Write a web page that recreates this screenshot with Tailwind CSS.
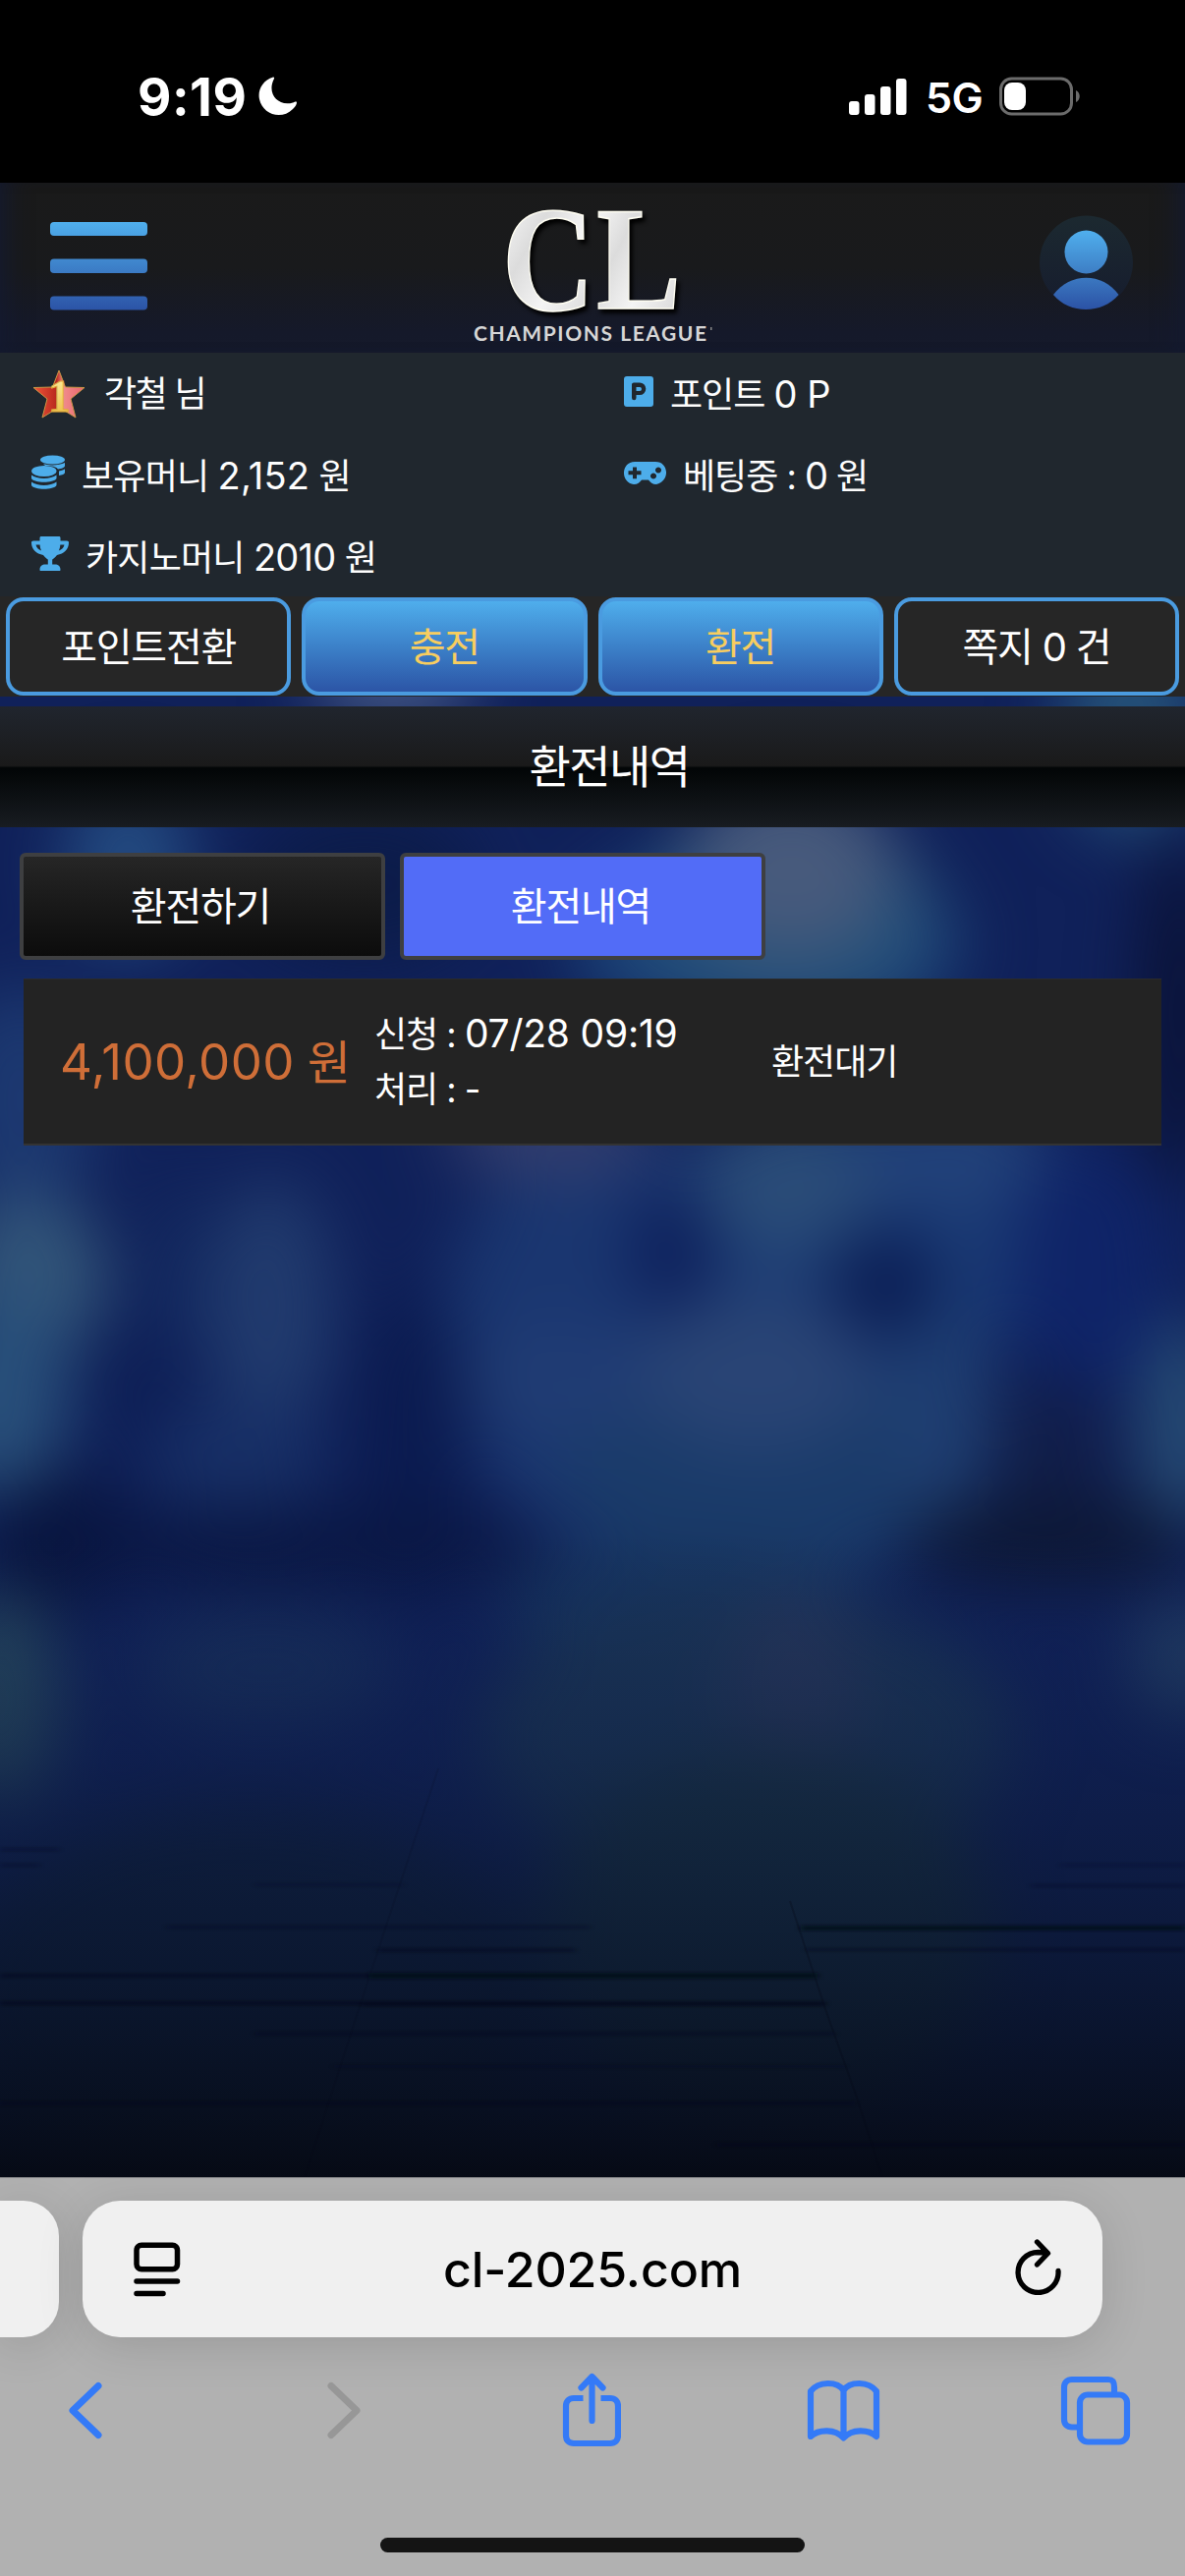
<!DOCTYPE html>
<html lang="ko">
<head>
    <meta charset="UTF-8">
    <meta name="viewport" content="width=device-width, initial-scale=1.0">
    <title>환전내역</title>
    <script src="https://cdn.jsdelivr.net/npm/@tailwindcss/browser@4"></script>
</head>
<body class="w-[1206px] h-[2622px] overflow-hidden bg-black text-white font-['Inter','Noto_Sans_CJK_KR',sans-serif] flex flex-col">

    <!-- status bar -->
    <div class="h-[186px] shrink-0 bg-black flex justify-between pt-[67px] pl-[140px] pr-[106px] font-semibold">
        <div class="flex items-center h-[62px]">
            <span class="text-[53px] leading-none font-bold tracking-[0.5px] w-[123px] whitespace-nowrap pt-[2px]">9:19</span>
            <svg class="w-[40px] h-[40px]" viewBox="0 0 40 40" fill="#fff"><path d="M15 0.6C4 4 -1 14 1 23c3 15 22 22 34 10 3-3 4-5 4-7-1-1-2 0-4 .5C20 31 8 17 16 2c.4-1-.2-1.600-1-1.400z"/></svg>
        </div>
        <div class="flex items-center h-[62px]">
            <svg class="w-[59px] h-[38px] mr-[19px]" viewBox="0 0 59 38" fill="#fff">
                <rect x="0" y="24" width="10.500" height="14" rx="3"/>
                <rect x="16" y="17" width="10.500" height="21" rx="3"/>
                <rect x="32" y="9" width="10.500" height="29" rx="3"/>
                <rect x="48" y="1" width="10.500" height="37" rx="3"/>
            </svg>
            <span class="text-[43px] leading-none tracking-[-0.5px] w-[57px] pt-[2px]">5G</span>
            <svg class="w-[84px] h-[40px] ml-[17px]" viewBox="0 0 84 40">
                <rect x="2.500" y="2" width="72" height="36" rx="11" fill="none" stroke="#6b6b6b" stroke-width="3"/>
                <rect x="6" y="6" width="22" height="28" rx="8" fill="#fff"/>
                <path d="M79 14c5 2 5 10 0 12z" fill="#6b6b6b"/>
            </svg>
        </div>
    </div>

    <!-- site header -->
    <header class="h-[173px] shrink-0 bg-[linear-gradient(to_bottom,#1a1a1a_0%,#191a1c_50%,#15192a_88%,#151a2b_100%)] shadow-[inset_26px_0_26px_-20px_#141a30,inset_-26px_0_26px_-20px_#141a30] flex justify-between items-start pl-[51px] pr-[52px]">
        <svg class="w-[99px] h-[92px] mt-[39px]" viewBox="0 0 99 92">
            <defs>
                <linearGradient id="blueFade" gradientUnits="userSpaceOnUse" x1="0" y1="0" x2="0" y2="92">
                    <stop offset="0" stop-color="#50b0ee"/><stop offset="1" stop-color="#2b52a5"/>
                </linearGradient>
            </defs>
            <g fill="url(#blueFade)">
                <rect x="0" y="1" width="99" height="14" rx="4"/>
                <rect x="0" y="38.500" width="99" height="14.500" rx="4"/>
                <rect x="0" y="76.500" width="99" height="14" rx="4"/>
            </g>
        </svg>
        <svg class="w-[250px] h-[173px] overflow-visible" viewBox="478 186 250 173">
            <defs>
                <linearGradient id="silver" x1="0" y1="0" x2="1" y2="1">
                    <stop offset="0" stop-color="#ffffff"/><stop offset=".35" stop-color="#dcdcdc"/><stop offset=".6" stop-color="#f4f4f4"/><stop offset="1" stop-color="#cfcfcf"/>
                </linearGradient>
            </defs>
            <g class="drop-shadow-[3px_4px_2px_#000]" font-family="Liberation Serif, serif" font-weight="700" stroke-width="1.500" stroke="#fffef2" fill="url(#silver)">
                <text x="511" y="315.500" font-size="152" textLength="94" lengthAdjust="spacingAndGlyphs">C</text>
                <text x="607" y="314" font-size="150" textLength="86" lengthAdjust="spacingAndGlyphs">L</text>
            </g>
            <text x="482" y="347" font-family="Lato, sans-serif" font-weight="700" font-size="21" fill="#d6d6d6" textLength="237">CHAMPIONS LEAGUE</text>
            <rect x="723" y="333" width="1.500" height="3" fill="#888"/>
        </svg>
        <svg class="w-[98px] h-[102px] mt-[33px]" viewBox="1056 219 98 102">
            <defs>
                <linearGradient id="userFade" gradientUnits="userSpaceOnUse" x1="0" y1="234" x2="0" y2="315">
                    <stop offset="0" stop-color="#50b0ee"/><stop offset=".5" stop-color="#3f82c8"/><stop offset="1" stop-color="#2b52a5"/>
                </linearGradient>
                <linearGradient id="userBg" x1="0" y1="0" x2="0" y2="1">
                    <stop offset="0" stop-color="#1c2930"/><stop offset="1" stop-color="#161c2e"/>
                </linearGradient>
            </defs>
            <circle cx="1105.500" cy="267" r="47.500" fill="url(#userBg)"/>
            <circle cx="1105.500" cy="256.500" r="22" fill="url(#userFade)"/>
            <path d="M1072 300c17-23 50-23 66.500 0-17 20-50 20-66.500 0z" fill="url(#userFade)"/>
        </svg>
    </header>

    <!-- account info -->
    <section class="h-[248px] shrink-0 bg-[#20272e] grid grid-cols-2 auto-rows-[83px] text-[36px] leading-none text-[#fdfdfd]">
        <div class="flex items-center pl-[33px]">
            <svg class="w-[54px] h-[52px] mr-[19px] mt-[3px]" viewBox="0 0 54 52">
                <defs>
                    <linearGradient id="starRed" x1="0" y1="0" x2="1" y2="0">
                        <stop offset="0" stop-color="#f0553a"/><stop offset=".45" stop-color="#b9291e"/><stop offset=".6" stop-color="#f08a8a"/><stop offset="1" stop-color="#e8646c"/>
                    </linearGradient>
                    <linearGradient id="oneGold" x1="0" y1="0" x2="0" y2="1">
                        <stop offset="0" stop-color="#fff3a8"/><stop offset="1" stop-color="#e9b93a"/>
                    </linearGradient>
                </defs>
                <path d="M27 1l6.500 17L53 18.500 39 30l5 19-17-10.500L10 49l5-19L1 18.500l19.500-.5z" fill="url(#starRed)" stroke="#c99545" stroke-width="1"/>
                <text x="16" y="43" font-family="Liberation Serif, serif" font-weight="700" font-size="46" fill="url(#oneGold)" stroke="#e0a83a" stroke-width="1">1</text>
            </svg>
            <span class="tracking-[-1.6px]">각철 님</span>
        </div>
        <div class="flex items-center pl-[32px]">
            <svg class="w-[30px] h-[31px] mr-[17px] -mt-[4px]" viewBox="0 0 30 31">
                <path fill="#4dadea" fill-rule="evenodd" d="M3 0h24a3 3 0 0 1 3 3v25a3 3 0 0 1-3 3H3a3 3 0 0 1-3-3V3a3 3 0 0 1 3-3zM8 8v14a2 2 0 0 0 4.500 0v-3H16a6.300 6.300 0 0 0 0-12.600H10A2 2 0 0 0 8 8zM12.500 11H16a2 2 0 0 1 0 4h-3.500z"/>
            </svg>
            <span class="tracking-[-1px]">포인트 <span class="text-[38px] tracking-[-0.5px]">0 P</span></span>
        </div>
        <div class="flex items-center pl-[32px]">
            <svg class="w-[34px] h-[35px] mr-[17px] -mt-[6px]" viewBox="0 0 34 35" fill="#4dadea">
                <ellipse cx="21.500" cy="5" rx="12.500" ry="4.500"/>
                <path d="M12 9c5 2 16 2 22-1v3c0 2-3 3-7 3.500C24 11 17 11 14 11z"/>
                <path d="M28 16.500c3-.5 5-1.300 6-2.300V18c0 1.500-3 2.600-6 3z"/>
                <ellipse cx="12.800" cy="16.500" rx="12.700" ry="5.600"/>
                <path d="M0 20.500c6 4.500 19.500 4.500 25.500 0V24c-3 5-22.500 5-25.500 0z"/>
                <path d="M0 27.500c6 4.500 19.500 4.500 25.500 0V31c-3 5-22.500 5-25.500 0z"/>
            </svg>
            <span class="tracking-[-0.8px]">보유머니 <span class="text-[38px] tracking-[0.2px]">2,152</span> 원</span>
        </div>
        <div class="flex items-center pl-[32px]">
            <svg class="w-[43px] h-[23px] mr-[17px] -mt-[4px]" viewBox="0 0 43 23">
                <path fill="#4dadea" fill-rule="evenodd" d="M11 0h21c14 0 15 20 1 23-4 0-6-2-8-4.500h-7C16 21 14 23 10 23-4 21-3 0 11 0zM9 5.500v3.800H4.500v4H9v4h4v-4h4.500v-4H13V5.500zM30 11.500a3 3 0 1 0 .01 0zM35 5.500a3 3 0 1 0 .01 0z"/>
            </svg>
            <span class="tracking-[-1px]">베팅중 : <span class="text-[38px]">0</span> 원</span>
        </div>
        <div class="flex items-center pl-[32px]">
            <svg class="w-[38px] h-[35px] mr-[17px] -mt-[6px]" viewBox="0 0 38 35">
                <path fill="#4dadea" fill-rule="evenodd" d="M10 0h18c1 0 1.500.6 1.500 1.500V4.500H36c1.300 0 2 .7 2 1.800 0 7-5 11.500-12 12.700-2 2.500-4 4-4.800 4.500v5H24c3 0 5.500 1.500 5.500 5.500 0 .6-.4 1-1 1h-19c-.6 0-1-.4-1-1 0-4 2.500-5.500 5.500-5.500h2.800v-5C16 23 14 21.500 12 19 5 17.800 0 13.300 0 6.300 0 5.200.7 4.500 2 4.500h6.500V1.500C8.500.6 9 0 10 0zM4.500 8.500c.6 3 2.600 5 5.600 6-1-2-1.400-4-1.500-6zM33.500 8.500h-4.200c-.1 2-.5 4-1.500 6 3-1 5.200-3 5.700-6z"/>
            </svg>
            <span class="tracking-[-0.8px]">카지노머니 <span class="text-[38px]">2010</span> 원</span>
        </div>
    </section>

    <div class="h-[102px] shrink-0 bg-[#262626] grid grid-cols-4 gap-[11px] px-[6px] text-[40px] leading-none tracking-[-1.2px]">
        <button class="h-[100px] mt-[1px] rounded-[18px] border-4 border-[#4a9be0] bg-[#262626] pt-[2px]">포인트전환</button>
        <button class="h-[100px] mt-[1px] rounded-[18px] border-4 border-[#4a9be0] bg-linear-to-b from-[#4faeec] to-[#2c55a6] text-[#f7cd5f] pt-[2px]">충전</button>
        <button class="h-[100px] mt-[1px] rounded-[18px] border-4 border-[#4a9be0] bg-linear-to-b from-[#4faeec] to-[#2c55a6] text-[#f7cd5f] pt-[2px]">환전</button>
        <button class="h-[100px] mt-[1px] rounded-[18px] border-4 border-[#4a9be0] bg-[#262626] pt-[2px]">쪽지 0 건</button>
    </div>

    <main class="relative h-[1507px] shrink-0 pt-[10px] bg-[#10215a] overflow-hidden">
        <!-- blurred stadium lights over a dark floor -->
        <svg class="absolute inset-0 w-[1206px] h-[1507px]" viewBox="0 709 1206 1507" preserveAspectRatio="none">
            <defs>
                <filter id="soft" filterUnits="userSpaceOnUse" x="-200" y="500" width="1600" height="1900" color-interpolation-filters="sRGB"><feGaussianBlur stdDeviation="34"/></filter>
                <filter id="line" filterUnits="userSpaceOnUse" x="-20" y="1800" width="1250" height="450"><feGaussianBlur stdDeviation="3 1.500"/></filter>
                <linearGradient id="floor" gradientUnits="userSpaceOnUse" x1="0" y1="1560" x2="0" y2="2216">
                    <stop offset="0" stop-color="#0f2048" stop-opacity="0"/>
                    <stop offset=".35" stop-color="#0d1b3c" stop-opacity=".4"/>
                    <stop offset=".65" stop-color="#0a152c" stop-opacity=".72"/>
                    <stop offset="1" stop-color="#060a14" stop-opacity=".98"/>
                </linearGradient>
            </defs>
            <rect x="0" y="709" width="1206" height="1507" fill="#10215a"/>
            <g filter="url(#soft)">
                <ellipse cx="400" cy="690" rx="85" ry="60" fill="#3c5080"/>
                <ellipse cx="1150" cy="740" rx="70" ry="110" fill="#245078"/>
                <ellipse cx="130" cy="880" rx="65" ry="90" fill="#234a80"/>
                <ellipse cx="370" cy="900" rx="120" ry="80" fill="#0c1c4a"/>
                <ellipse cx="780" cy="960" rx="200" ry="100" fill="#1b4277"/>
                <ellipse cx="800" cy="930" rx="150" ry="110" fill="#255079"/>
                <ellipse cx="805" cy="880" rx="105" ry="90" fill="#475a7c"/>
                <ellipse cx="1200" cy="1030" rx="40" ry="180" fill="#0a1236"/>
                <ellipse cx="20" cy="1120" rx="80" ry="120" fill="#1c3870"/>
                <ellipse cx="620" cy="1360" rx="170" ry="210" fill="#1a3670"/>
                <ellipse cx="780" cy="1480" rx="220" ry="130" fill="#1a3b6a"/>
                <ellipse cx="860" cy="1270" rx="200" ry="150" fill="#1a3a74"/>
                <ellipse cx="560" cy="1150" rx="110" ry="45" fill="#343e6e"/>
                <ellipse cx="800" cy="1205" rx="90" ry="70" fill="#2a4c78"/>
                <ellipse cx="970" cy="1170" rx="100" ry="55" fill="#22427a"/>
                <ellipse cx="685" cy="1275" rx="42" ry="64" fill="#0c1e5a"/>
                <ellipse cx="900" cy="1310" rx="55" ry="58" fill="#0a1d54"/>
                <ellipse cx="1110" cy="1290" rx="80" ry="130" fill="#0f2468"/>
                <ellipse cx="570" cy="1405" rx="100" ry="55" fill="#203c74"/>
                <ellipse cx="770" cy="1395" rx="120" ry="80" fill="#294475"/>
                <ellipse cx="960" cy="1440" rx="50" ry="110" fill="#1f3f72"/>
                <ellipse cx="30" cy="1300" rx="80" ry="85" fill="#325579"/>
                <ellipse cx="0" cy="1420" rx="70" ry="110" fill="#284f7a"/>
                <ellipse cx="145" cy="1420" rx="45" ry="70" fill="#0d1e55"/>
                <ellipse cx="180" cy="1290" rx="24" ry="100" fill="#132a60"/>
                <ellipse cx="275" cy="1330" rx="65" ry="130" fill="#213b6e"/>
                <ellipse cx="240" cy="1485" rx="90" ry="60" fill="#172f66"/>
                <ellipse cx="420" cy="1480" rx="60" ry="170" fill="#0b1b50"/>
                <ellipse cx="1070" cy="1480" rx="65" ry="80" fill="#111e4a"/>
                <ellipse cx="1206" cy="1450" rx="48" ry="110" fill="#264b74"/>
                <ellipse cx="60" cy="1570" rx="80" ry="70" fill="#08143e"/>
                <ellipse cx="300" cy="1575" rx="260" ry="42" fill="#0a1743"/>
                <ellipse cx="1070" cy="1570" rx="150" ry="48" fill="#0d1836"/>
                <ellipse cx="690" cy="1630" rx="180" ry="60" fill="#16345f"/>
                <ellipse cx="760" cy="1770" rx="270" ry="150" fill="#1a3456"/>
                <ellipse cx="810" cy="1730" rx="70" ry="110" fill="#26365a"/>
                <ellipse cx="0" cy="1730" rx="60" ry="110" fill="#27495f"/>
                <ellipse cx="270" cy="1700" rx="130" ry="60" fill="#172e5c"/>
                <ellipse cx="1210" cy="1690" rx="60" ry="60" fill="#233f66"/>
                <ellipse cx="780" cy="1970" rx="230" ry="190" fill="#193344"/>
                <ellipse cx="250" cy="2030" rx="300" ry="190" fill="#0f2142"/>
            </g>
            <rect x="0" y="1540" width="1206" height="676" fill="url(#floor)"/>
            <g filter="url(#line)" fill="#040714" opacity=".75">
                <rect x="815" y="1960" width="391" height="5"/>
                <rect x="820" y="1983" width="386" height="3" opacity=".5"/>
                <rect x="385" y="1983" width="200" height="4" opacity=".5"/>
                <rect x="170" y="1960" width="430" height="3" opacity=".4"/>
                <rect x="375" y="2008" width="457" height="6"/>
                <rect x="0" y="2009" width="375" height="4" opacity=".5"/>
                <rect x="0" y="2037" width="368" height="4" opacity=".6"/>
                <rect x="368" y="2037" width="472" height="5" opacity=".7"/>
                <rect x="260" y="2068" width="590" height="4" opacity=".4"/>
                <rect x="340" y="2102" width="520" height="3" opacity=".3"/>
                <rect x="0" y="2139" width="870" height="4" opacity=".4"/>
                <rect x="730" y="2181" width="476" height="4" opacity=".4"/>
                <rect x="1050" y="1918" width="156" height="3" opacity=".4"/>
                <rect x="1080" y="1897" width="126" height="3" opacity=".3"/>
                <rect x="260" y="1917" width="150" height="3" opacity=".3"/>
                <rect x="0" y="1881" width="60" height="3" opacity=".4"/>
                <rect x="0" y="1897" width="40" height="3" opacity=".4"/>
            </g>
            <path d="M804 1935l36 110 32 90 26 81" fill="none" stroke="#050916" stroke-width="2" opacity=".3"/>
            <path d="M446 1800l-76 230-60 186" fill="none" stroke="#050916" stroke-width="2" opacity=".12"/>
        </svg>

        <div class="relative">
            <div class="h-[123px] bg-[linear-gradient(to_bottom,#20252e_0%,#1a1a1a_49%,#020506_51%,#181c21_100%)] flex items-center justify-center pl-[34px] pb-[2px] text-[46px] leading-none tracking-[-1.6px]">환전내역</div>

            <div class="flex gap-[15px] pl-5 pt-[26px] text-[40px] leading-none tracking-[-1.2px]">
                <button class="w-[372px] h-[109px] rounded-[6px] border-4 border-[#3e3f41] bg-linear-to-b from-[#262626] to-[#0c0c0c] pr-[4px]">환전하기</button>
                <button class="w-[372px] h-[109px] rounded-[6px] border-4 border-[#3e3f41] bg-[#526cf7] pr-[4px]">환전내역</button>
            </div>

            <div class="mt-[19px] mx-6 h-[170px] bg-[#232323] border-t border-t-[#2b2b2b] border-b-2 border-b-[#333] flex items-center">
                <div class="w-[357px] pl-[37px] text-[48px] leading-none text-[#cf6e38] whitespace-nowrap tracking-[-0.5px]"><span class="text-[51px] tracking-[0.4px]">4,100,000</span> 원</div>
                <div class="w-[404px] text-[36px] leading-[56px] whitespace-nowrap tracking-[-1px]">
                    <p>신청 : <span class="text-[39px] leading-none tracking-[-0.2px]">07/28 09:19</span></p>
                    <p>처리 : -</p>
                </div>
                <div class="text-[36px] leading-none tracking-[-1px]">환전대기</div>
            </div>
        </div>
    </main>

    <!-- browser toolbar -->
    <footer class="h-[406px] shrink-0 bg-[#b1b1b1] border-t border-[#8a8b8d] text-black">
        <div class="flex gap-6 pt-[23px]">
            <div class="w-[60px] h-[139px] rounded-r-[36px] bg-[#f0f0f0] shadow-[0_8px_48px_rgba(0,0,0,0.13)]"></div>
            <div class="w-[1038px] h-[139px] rounded-[38px] bg-[#f0f0f0] shadow-[0_8px_48px_rgba(0,0,0,0.13)] flex items-center justify-between pl-[52px] pr-[42px]">
                <svg class="w-[48px] h-[56px]" viewBox="0 0 48 56" fill="none" stroke="#000" stroke-width="5.500" stroke-linecap="round">
                    <rect x="3" y="3.200" width="41.500" height="24.500" rx="5"/>
                    <path d="M3 40h41.500M3 52.500h27"/>
                </svg>
                <span class="text-[50px] leading-none font-medium tracking-[-0.1px] mr-[11px]">cl-2025.com</span>
                <svg class="w-[47px] h-[57px] -mt-[4px]" viewBox="0 0 47 57" fill="none" stroke="#000" stroke-width="5.300" stroke-linecap="round" stroke-linejoin="round">
                    <path d="M44 32.500A20.500 20.500 0 1 1 23.500 13.500L33 14M22.500 3L33.500 14.500 22.500 26"/>
                </svg>
            </div>
        </div>
        <div class="h-[149px] flex items-center pl-[69px]">
            <svg class="w-[35px] h-[59px]" viewBox="0 0 35 59" fill="none" stroke="#347af7" stroke-width="7" stroke-linecap="round" stroke-linejoin="round"><path d="M31 4.500L5 29.500 31 54.500"/></svg>
            <svg class="w-[35px] h-[59px] ml-[229px]" viewBox="0 0 35 59" fill="none" stroke="#979797" stroke-width="7" stroke-linecap="round" stroke-linejoin="round"><path d="M4 4.500L30 29.500 4 54.500"/></svg>
            <svg class="w-[60px] h-[76px] ml-[204px] -mt-[2px]" viewBox="0 0 60 76" fill="none" stroke="#347af7" stroke-width="6.200" stroke-linecap="round" stroke-linejoin="round">
                <path stroke-linecap="butt" d="M21.500 26H12c-5 0-8 3-8 8v30c0 5 3 8 8 8h37c5 0 8-3 8-8V34c0-5-3-8-8-8h-9.500"/>
                <path d="M30.500 49V5M19.500 15.500l11-11.500 11 11.500"/>
            </svg>
            <svg class="w-[75px] h-[64px] ml-[189px]" viewBox="0 0 75 64" fill="none" stroke="#347af7" stroke-width="6.200" stroke-linecap="round" stroke-linejoin="round">
                <path d="M37.500 11C31 1.500 12 1.500 4 12v46c8-7.500 25-8 33.500 1.500C46 50 63 50.500 71 58V12C63 1.500 44 1.500 37.500 11zM37.500 11v48"/>
            </svg>
            <svg class="w-[72px] h-[71px] ml-[183px]" viewBox="0 0 72 71" fill="none" stroke="#347af7" stroke-width="6.200">
                <path d="M17.500 52.500H12c-5 0-8-3-8-8V12c0-5 3-8 8-8h37c5 0 6 3 6 8v5"/>
                <rect x="20" y="19.500" width="48" height="48" rx="8"/>
            </svg>
        </div>
        <div class="mt-[55px] mx-auto w-[432px] h-[15px] rounded-full bg-[#141414]"></div>
    </footer>
</body>
</html>
